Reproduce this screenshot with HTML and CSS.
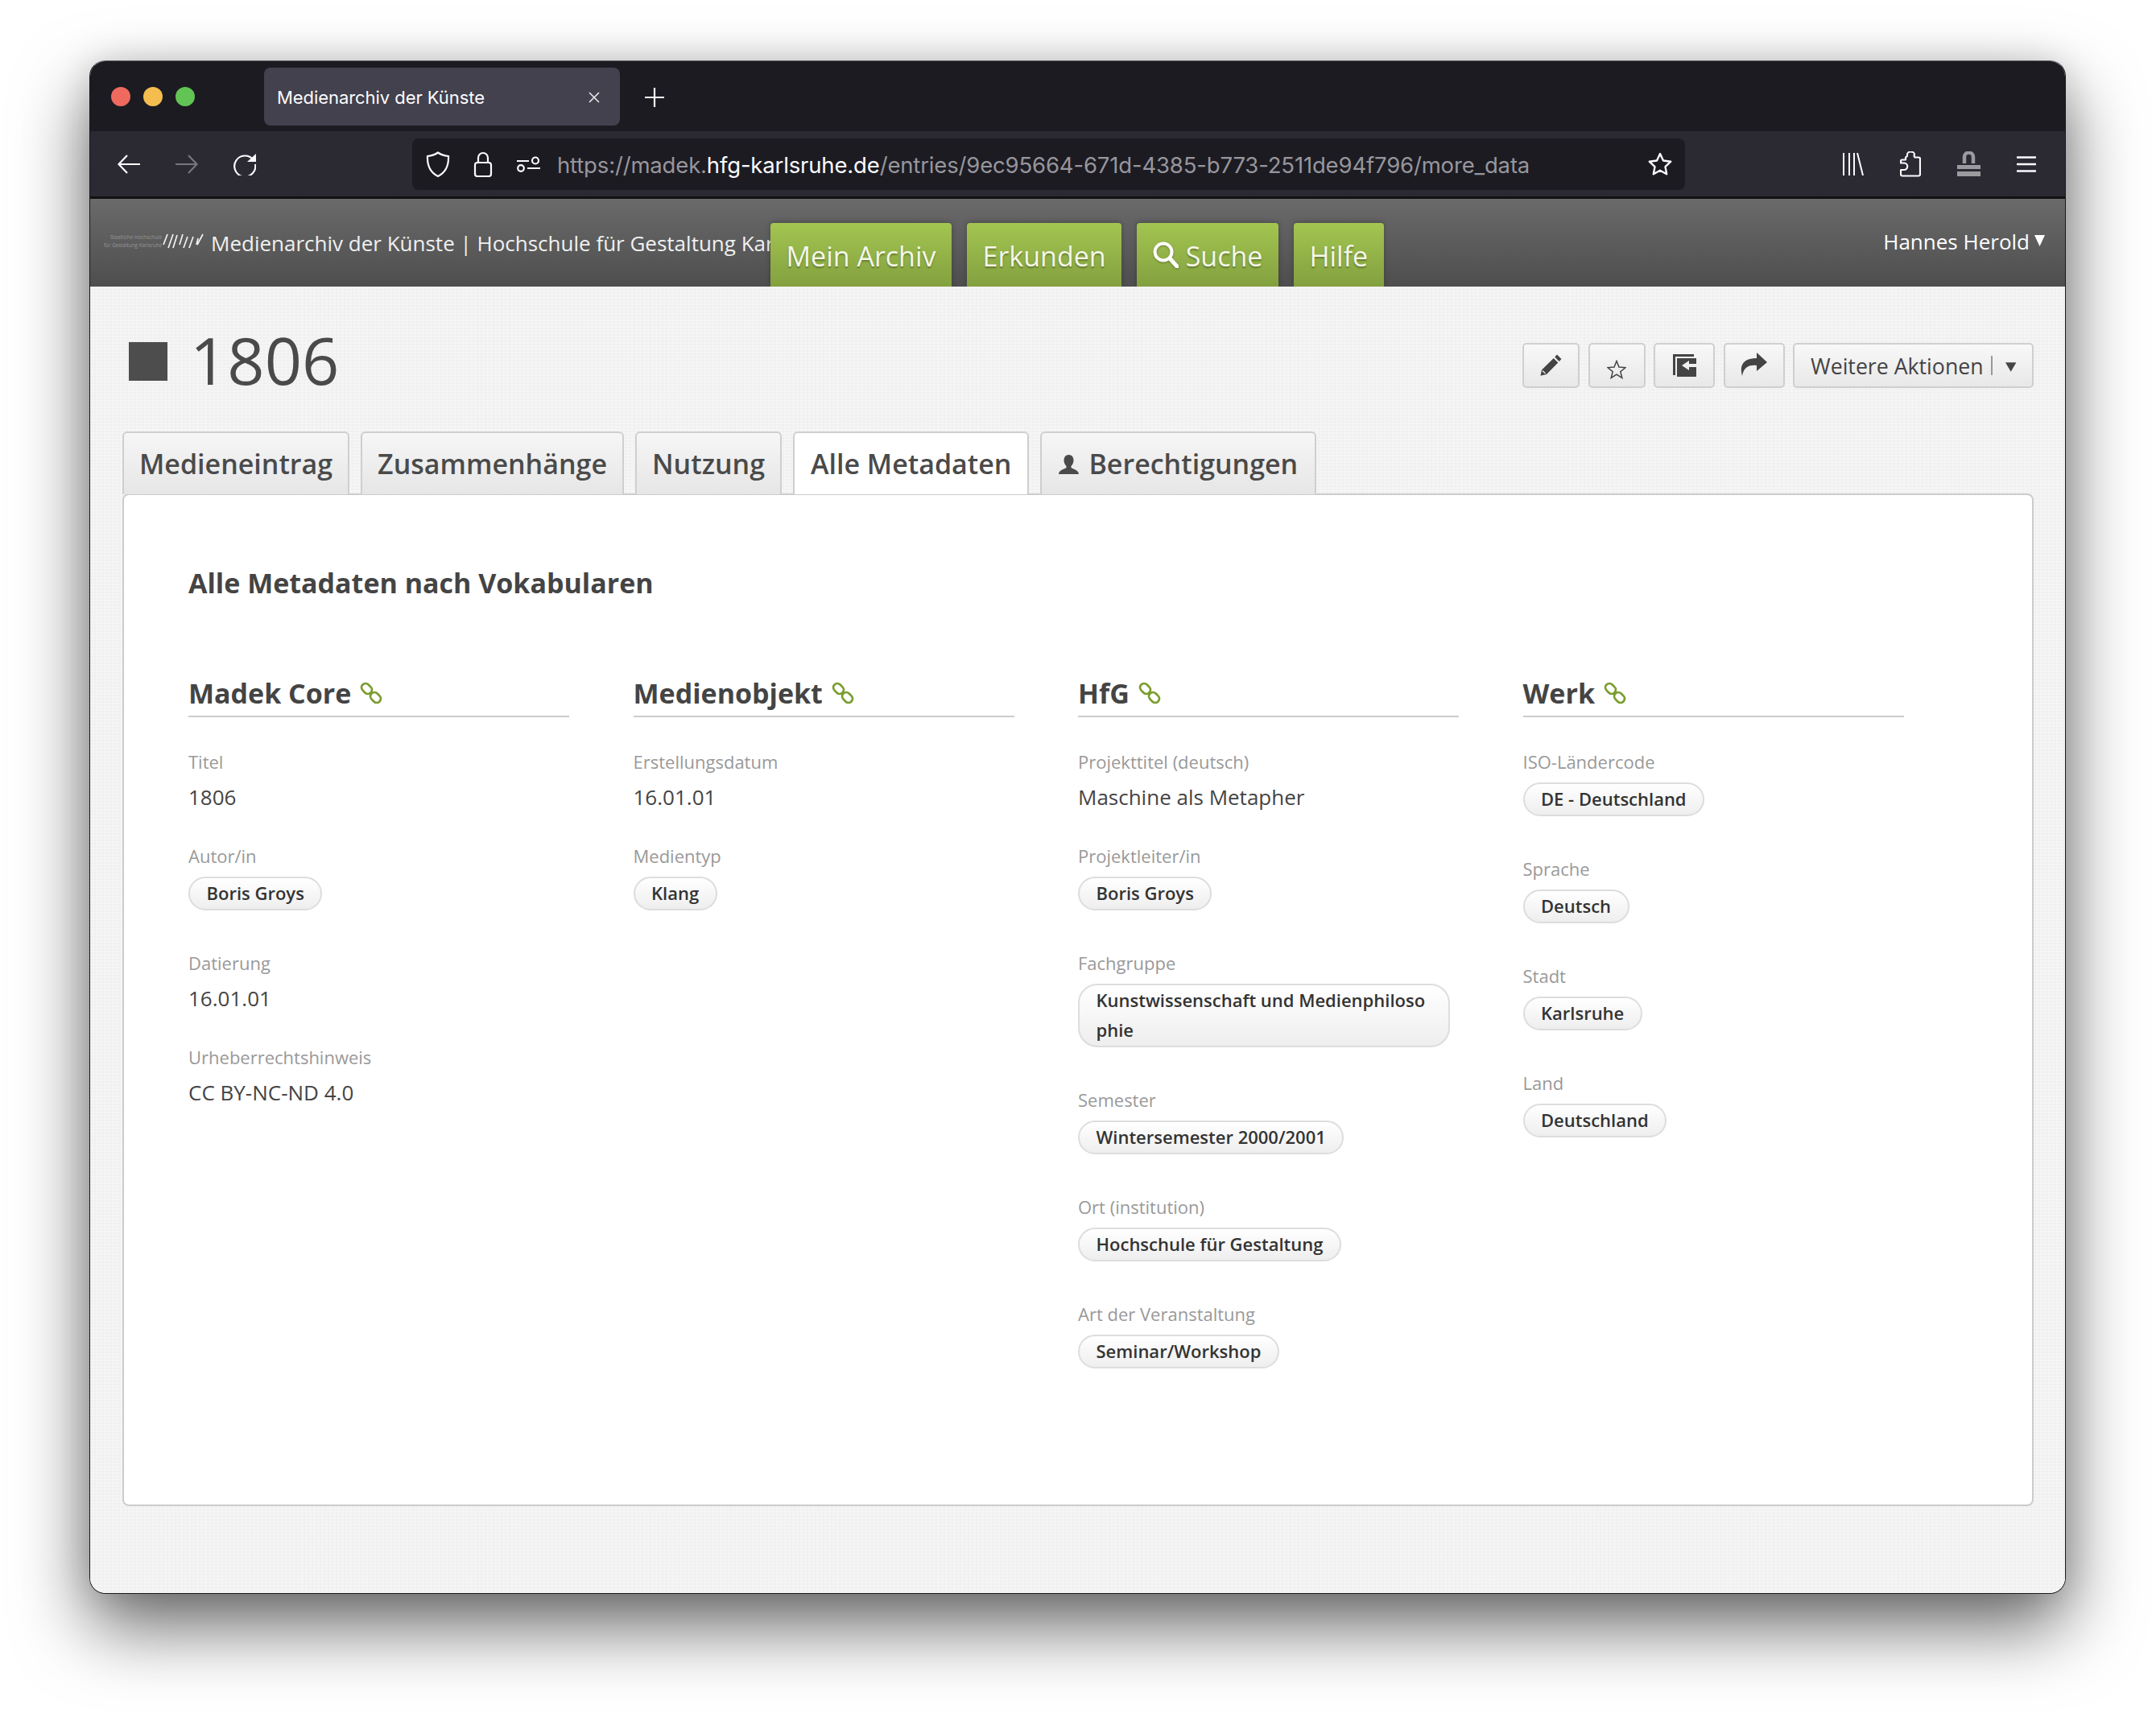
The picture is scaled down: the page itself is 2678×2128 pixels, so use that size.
FILE: index.html
```html
<!DOCTYPE html>
<html lang="de">
<head>
<meta charset="utf-8">
<title>Medienarchiv der Künste</title>
<link rel="stylesheet" href="styles.css">
</head>
<body>
<div class="window">
  <div class="titlebar">
    <div class="lights"><span class="light red"></span><span class="light yellow"></span><span class="light green"></span></div>
    <div class="tab-chrome">
      <span class="tab-title">Medienarchiv der Künste</span>
      <svg class="tab-x" width="14" height="14" viewBox="0 0 14 14"><path d="M1 1l12 12M13 1L1 13" stroke="#e8e8ea" stroke-width="1.6" fill="none"/></svg>
    </div>
    <svg class="tab-plus" width="24" height="24" viewBox="0 0 24 24"><path d="M12 0v24M0 12h24" stroke="#fff" stroke-width="2.2" fill="none"/></svg>
  </div>
  <div class="toolbar">
    <svg class="tb-back" width="28" height="24" viewBox="0 0 28 24"><path d="M28 12H2M12 1L1.500 12 12 23" stroke="#fbfbfe" stroke-width="2.2" fill="none"/></svg>
    <svg class="tb-fwd" width="28" height="24" viewBox="0 0 28 24"><path d="M0 12h26M16 1l10.500 11L16 23" stroke="#77767d" stroke-width="2.2" fill="none"/></svg>
    <svg class="tb-reload" width="28" height="28" viewBox="0 0 28 28"><path d="M24.500 8.500A13 13 0 1 0 27 14" stroke="#fbfbfe" stroke-width="2.200" fill="none"/><path d="M28 1v10H17z" fill="#fbfbfe"/></svg>
    <div class="urlbar">
      <svg class="ub-shield" width="30" height="32" viewBox="0 0 30 32"><path d="M15 1.500C11 4.500 6 5.500 2 6c-.5 11 3 20 13 25 10-5 13.500-14 13-25-4-.5-9-1.500-13-4.500z" stroke="#fbfbfe" stroke-width="2.200" fill="none"/></svg>
      <svg class="ub-lock" width="24" height="32" viewBox="0 0 24 32"><rect x="2" y="14" width="20" height="17" rx="3" stroke="#fbfbfe" stroke-width="2.200" fill="none"/><path d="M6 14V8a6 6 0 0 1 12 0v6" stroke="#fbfbfe" stroke-width="2.200" fill="none"/></svg>
      <svg class="ub-perm" width="29" height="20" viewBox="0 0 29 20"><path d="M0 6h15M13 15h16" stroke="#fbfbfe" stroke-width="2.200" fill="none"/><circle cx="23" cy="5.500" r="4" stroke="#fbfbfe" stroke-width="2.200" fill="none"/><circle cx="5" cy="15" r="3.800" stroke="#fbfbfe" stroke-width="2.200" fill="none"/></svg>
      <span class="url"><span class="url-dim">https://madek.</span><span class="url-host">hfg-karlsruhe.de</span><span class="url-dim">/entries/9ec95664-671d-4385-b773-2511de94f796/more_data</span></span>
      <svg class="ub-star" width="32" height="30" viewBox="0 0 32 30"><path d="M16 2l4 8.500 9.300 1.200-6.800 6.400 1.700 9.200L16 22.800 7.800 27.300l1.700-9.200-6.800-6.400L12 10.500z" stroke="#fbfbfe" stroke-width="2.400" stroke-linejoin="round" fill="none"/></svg>
    </div>
    <div class="tb-right">
      <svg width="26" height="28" viewBox="0 0 26 28"><path d="M1 0v28M8 0v28M14 0v28M18 0l7 28" stroke="#fbfbfe" stroke-width="2" fill="none"/></svg>
      <svg width="26" height="32" viewBox="0 0 26 32"><path d="M7 7.500V10.500H2.500Q1 10.500 1 12V14.500H5a3.500 3.500 0 0 1 0 8.500H1V28.500Q1 30.500 3 30.500H23Q25 30.500 25 28.500V9Q25 7.500 23 7.500H18.500Q17 6 18 4a4.500 3.500 0 0 0-9 0Q9.500 6.500 7 7.500z" stroke="#fbfbfe" stroke-width="2.200" fill="none" stroke-linejoin="round"/></svg>
      <svg width="29" height="32" viewBox="0 0 29 32"><path d="M9 15V7a5.500 5.500 0 0 1 11 0v8" stroke="#9b9b9f" stroke-width="4.500" fill="none"/><rect y="17" width="29" height="5" fill="#9b9b9f"/><rect y="25" width="29" height="6" fill="#9b9b9f"/></svg>
      <svg width="24" height="20" viewBox="0 0 24 20"><path d="M.5 1.500h23M.5 10h23M.5 18.500h23" stroke="#fbfbfe" stroke-width="2.300" stroke-linecap="round" fill="none"/></svg>
    </div>
  </div>
  <div class="site-header">
    <div class="logo">
      <div class="logo-text"><span>Staatliche Hochschule</span><span>für Gestaltung Karlsruhe</span></div>
      <svg class="logo-marks" width="52" height="20" viewBox="0 0 52 20"><path d="M6 1L1 14M13 1L7 18M18 2l-5 16M25 1l-4 13M31 4l-5 14M38 4l-5 14M44 6l-2 8M50 1l-7 13" stroke="#f2f2f2" stroke-width="1.700" fill="none"/></svg>
    </div>
    <div class="site-name"><span>Medienarchiv der Künste | Hochschule für Gestaltung Karlsruhe</span></div>
    <nav class="main-nav">
      <a class="nav-item">Mein Archiv</a>
      <a class="nav-item">Erkunden</a>
      <a class="nav-item nav-item-search"><svg class="nav-search" width="32" height="33" viewBox="0 0 32 33"><circle cx="13" cy="13" r="10.500" stroke="#fff" stroke-width="4" fill="none"/><path d="M21 21l9 10" stroke="#fff" stroke-width="5" stroke-linecap="round"/></svg>Suche</a>
      <a class="nav-item">Hilfe</a>
    </nav>
    <div class="user">Hannes Herold<svg width="13" height="14" viewBox="0 0 13 14"><path d="M0 0h13L6.500 14z" fill="#fff"/></svg></div>
  </div>
  <main class="page">
    <div class="title-row">
      <div class="title-left"><span class="title-square"></span><h1>1806</h1></div>
      <div class="actions">
        <button class="btn btn-s"><svg class="ic-pencil" width="27" height="27" viewBox="0 0 27 27"><path d="M21 .5l5.500 5.500-2.800 3-5.500-5.500zM16.800 5l5.500 5.500L8 25l-7.500 1.800L2 19.500z" fill="#444"/><path d="M3 20.500l3.500 3.500" stroke="#eee" stroke-width="1.300"/></svg></button>
        <button class="btn btn-s"><svg class="star-low" width="24" height="24" viewBox="0 0 24 24"><path d="M12 1.500l3 7.500 8 .6-6.200 5.100 2 7.800L12 18.200l-6.800 4.300 2-7.800L1 9.600 9 9z" stroke="#444" stroke-width="1.500" fill="none"/></svg></button>
        <button class="btn btn-m"><svg width="29" height="28" viewBox="0 0 29 28"><path d="M0 0h26v3H3v23H0z" fill="#444"/><path d="M5 5h24v23H5zM20 8l-9 6 9 6v-4h9v-4h-9z" fill="#444" fill-rule="evenodd"/></svg></button>
        <button class="btn btn-m"><svg class="ic-share" width="33" height="29" viewBox="0 0 33 29"><path d="M20 0l13 12-13 11v-7C12 15 4 17 2 29-2 15 4 7 20 7z" fill="#444"/></svg></button>
        <button class="btn btn-more">Weitere Aktionen<span class="btn-sep"></span><svg class="ic-caret" width="14" height="12" viewBox="0 0 14 12"><path d="M0 0h14L7 12z" fill="#444"/></svg></button>
      </div>
    </div>
    <div class="tabs">
      <a class="tab">Medieneintrag</a>
      <a class="tab">Zusammenhänge</a>
      <a class="tab">Nutzung</a>
      <a class="tab tab-active">Alle Metadaten</a>
      <a class="tab tab-perm"><svg class="tab-person" width="25" height="24" viewBox="0 0 25 24"><path d="M12.500 0c4 0 6 3 6 7 0 3-1.500 5.500-3 7v2c1 1.500 9.500 2.500 9.500 8H0c0-5.500 8.500-6.500 9.500-8v-2c-1.500-1.500-3-4-3-7 0-4 2-7 6-7z" fill="#4a4a4a"/></svg>Berechtigungen</a>
    </div>
    <section class="panel">
      <h2>Alle Metadaten nach Vokabularen</h2>
      <div class="vocabs">
        <div class="vocab">
          <h3>Madek Core<svg class="chain"><use href="#chain"/></svg></h3>
          <div class="field"><div class="label">Titel</div><div class="value">1806</div></div>
          <div class="field"><div class="label">Autor/in</div><span class="pill">Boris Groys</span></div>
          <div class="field"><div class="label">Datierung</div><div class="value">16.01.01</div></div>
          <div class="field"><div class="label">Urheberrechtshinweis</div><div class="value">CC BY-NC-ND 4.0</div></div>
        </div>
        <div class="vocab">
          <h3>Medienobjekt<svg class="chain"><use href="#chain"/></svg></h3>
          <div class="field"><div class="label">Erstellungsdatum</div><div class="value">16.01.01</div></div>
          <div class="field"><div class="label">Medientyp</div><span class="pill">Klang</span></div>
        </div>
        <div class="vocab">
          <h3>HfG<svg class="chain"><use href="#chain"/></svg></h3>
          <div class="field"><div class="label">Projekttitel (deutsch)</div><div class="value">Maschine als Metapher</div></div>
          <div class="field"><div class="label">Projektleiter/in</div><span class="pill">Boris Groys</span></div>
          <div class="field"><div class="label">Fachgruppe</div><span class="pill pill-wrap">Kunstwissenschaft und Medienphilosophie</span></div>
          <div class="field"><div class="label">Semester</div><span class="pill">Wintersemester 2000/2001</span></div>
          <div class="field"><div class="label">Ort (institution)</div><span class="pill">Hochschule für Gestaltung</span></div>
          <div class="field"><div class="label">Art der Veranstaltung</div><span class="pill">Seminar/Workshop</span></div>
        </div>
        <div class="vocab">
          <h3>Werk<svg class="chain"><use href="#chain"/></svg></h3>
          <div class="field"><div class="label">ISO-Ländercode</div><span class="pill">DE - Deutschland</span></div>
          <div class="field"><div class="label">Sprache</div><span class="pill">Deutsch</span></div>
          <div class="field"><div class="label">Stadt</div><span class="pill">Karlsruhe</span></div>
          <div class="field"><div class="label">Land</div><span class="pill">Deutschland</span></div>
        </div>
      </div>
    </section>
  </main>
</div>
<svg class="defs" width="0" height="0">
  <symbol id="chain" viewBox="0 0 28 28">
    <g fill="none" stroke="#7a9d2f" stroke-width="2.800">
      <rect x="1.500" y="3.500" width="14" height="10" rx="5" transform="rotate(45 8.500 8.500)"/>
      <rect x="12.500" y="14.500" width="14" height="10" rx="5" transform="rotate(45 19.500 19.500)"/>
    </g>
  </symbol>
</svg>
</body>
</html>
```
FILE: styles.css
```css
* { box-sizing: border-box; }
html, body { margin: 0; padding: 0; background: #fff; }
body { padding: 75px 112px 0 111px; height: 2128px; overflow: hidden; font-family: "Open Sans", "Liberation Sans", sans-serif; color: #444; }
.defs { position: absolute; }

.window {
  width: 2455px; height: 1905px;
  border-radius: 20px;
  border: 1px solid #1a1a1a;
  border-top-color: #6a6a6a;
  overflow: hidden;
  display: flex; flex-direction: column;
  background: #f2f2f2;
  box-shadow: 0 40px 90px rgba(0,0,0,.6), 0 0 40px rgba(0,0,0,.12);
}

.titlebar { height: 87px; background: #1c1b22; display: flex; align-items: flex-start; flex: none; }
.lights { display: flex; gap: 16px; padding: 32px 0 0 26px; width: 216px; flex: none; }
.light { width: 24px; height: 24px; border-radius: 50%; }
.red { background: #ee6a5f; }
.yellow { background: #f5bd4f; }
.green { background: #61c454; }
.tab-chrome { margin-top: 8px; width: 442px; height: 72px; background: #42414d; border-radius: 8px; display: flex; align-items: center; justify-content: space-between; padding: 2px 25px 0 16px; flex: none; }
.tab-title { font: 400 22px "Inter", sans-serif; color: #fbfbfe; letter-spacing: -0.06px; }
.tab-plus { margin: 33px 0 0 31px; }

.toolbar { height: 81px; background: #2b2a33; display: flex; align-items: center; flex: none; }
.tb-back { margin-left: 34px; }
.tb-fwd { margin-left: 44px; }
.tb-reload { margin-left: 44px; }
.urlbar { margin-left: 194px; width: 1581px; height: 64px; border-radius: 8px; background: #1c1b22; display: flex; align-items: center; padding-left: 17px; flex: none; }
.ub-lock { margin-left: 29px; }
.ub-perm { margin-left: 30px; }
.url { margin-left: 21px; padding-top: 2px; font: 400 27.5px "Inter", sans-serif; letter-spacing: -0.16px; white-space: nowrap; }
.url-dim { color: #97969c; }
.url-host { color: #fbfbfe; }
.ub-star { margin-left: auto; margin-right: 15px; }
.tb-right { display: flex; align-items: center; margin-left: 196px; gap: 45px; }

.site-header {
  height: 112px; flex: none; display: flex; align-items: flex-start;
  border-top: 3px solid #111;
  background: linear-gradient(#6a6a6a, #4e4e4e);
  color: #fff;
}
.logo { width: 150px; flex: none; display: flex; padding: 43px 0 0 9px; align-items: flex-start; }
.logo-text { width: 80px; flex: none; display: flex; flex-direction: column; align-items: flex-end; font-size: 6.300px; line-height: 10px; color: #959595; white-space: nowrap; }
.logo-marks { margin-left: 1px; flex: none; }
.site-name { width: 695px; flex: none; overflow: hidden; white-space: nowrap; font-size: 26px; line-height: 40px; padding-top: 35px; color: #f0f0f0; }
.main-nav { display: flex; gap: 19px; margin-top: 30px; flex: none; }
.nav-item {
  height: 79px; padding: 2px 19.500px 0; display: flex; align-items: center; gap: 7px;
  font-size: 34px; color: #f4f7e8;
  background: linear-gradient(#a3c551, #83a03f);
  border-radius: 4px 4px 0 0;
  text-shadow: 0 2px 2px rgba(0,0,0,.3);
  box-shadow: 0 -1px 6px rgba(0,0,0,.25);
}
.nav-item-search { gap: 9px; }
.nav-search { filter: drop-shadow(0 1px 1px rgba(0,0,0,.3)); margin-top: -2px; }
.user { margin-left: auto; margin-right: 25px; margin-top: 33px; font-size: 26px; line-height: 40px; display: flex; align-items: flex-start; gap: 6px; }
.user svg { margin-top: 12px; }

.page {
  flex: 1; padding: 0 39px 0 40px;
  background-color: #f2f2f2;
  background-image:
    repeating-linear-gradient(90deg, rgba(0,0,0,.010) 0 2px, transparent 2px 5px),
    repeating-linear-gradient(0deg, rgba(255,255,255,.30) 0 2px, transparent 2px 4px);
}
.title-row { height: 180px; padding-top: 70px; display: flex; justify-content: space-between; align-items: flex-start; }
.title-left { display: flex; align-items: flex-start; padding-left: 8px; }
.title-square { width: 48px; height: 48px; background: #4d4d4d; margin-top: -1px; }
h1 { margin: -20px 0 0 28px; font-size: 81px; line-height: 82px; font-weight: 400; color: #4a4a4a; }
.actions { display: flex; gap: 10.500px; }
.btn {
  height: 56px; padding: 0; margin: 0; display: flex; align-items: center; justify-content: center;
  border: 2px solid #cfcfcf; border-radius: 5px;
  background: linear-gradient(#f8f8f8, #e8e8e8);
  font: 400 26.700px "Open Sans", sans-serif; color: #444;
  white-space: nowrap;
}
.btn-s { width: 71px; }
.btn-m { width: 76px; }
.btn-more { width: 299px; padding: 0 20px; }
.btn-sep { width: 2px; height: 24px; background: #999; margin: 0 16px 0 9px; }
.ic-caret { margin-top: 3px; }
.star-low { margin-top: 10px; }
.ic-pencil { margin-bottom: 2px; }
.ic-share { margin-bottom: 3px; }

.tabs { display: flex; gap: 14px; height: 78px; align-items: stretch; }
.tab {
  border: 2px solid #cfcfcf; border-bottom: 0; border-radius: 6px 6px 0 0;
  padding: 0 19px; display: flex; align-items: center; gap: 12px;
  font-size: 34px; font-weight: 600; color: #4a4a4a;
  background: linear-gradient(#f6f6f6, #e6e6e6);
  white-space: nowrap;
}
.tab-active { background: #fff; position: relative; z-index: 1; padding: 0 20px; }
.tab-perm { padding: 0 21px; }
.tab-person { margin-top: 2px; }

.panel {
  margin-top: -1px; height: 1258px;
  border: 2px solid #ccc; border-radius: 8px;
  background: #fff;
  padding: 84px 0 0 80px;
}
h2 { margin: 0 0 87px; font-size: 34px; line-height: 50px; font-weight: 700; color: #444; }
.vocabs { display: grid; grid-template-columns: repeat(4, 473px); column-gap: 79.500px; }
h3 { margin: 0 0 34px; padding-bottom: 3px; border-bottom: 2px solid #ccc; font-size: 34px; line-height: 50px; font-weight: 700; color: #444; display: flex; align-items: flex-start; }
.chain { width: 28px; height: 28px; margin: 11px 0 0 11px; }
.field { margin-bottom: 31px; }
.field:has(.pill) { margin-bottom: 44px; }
.label { font-size: 22px; line-height: 42px; color: #999; }
.value { font-size: 26px; line-height: 46px; margin-bottom: -2px; color: #444; }
.pill {
  display: block; width: fit-content; max-width: 100%;
  margin-top: 5px;
  padding: 0 20.500px; height: 42px; line-height: 37px;
  border: 2px solid #ddd; border-radius: 21px;
  background: linear-gradient(#fff, #eee);
  font-size: 22px; font-weight: 600; color: #333;
}
.pill-wrap { width: 462px; height: 79px; word-break: break-all; border-radius: 24px; }
```
